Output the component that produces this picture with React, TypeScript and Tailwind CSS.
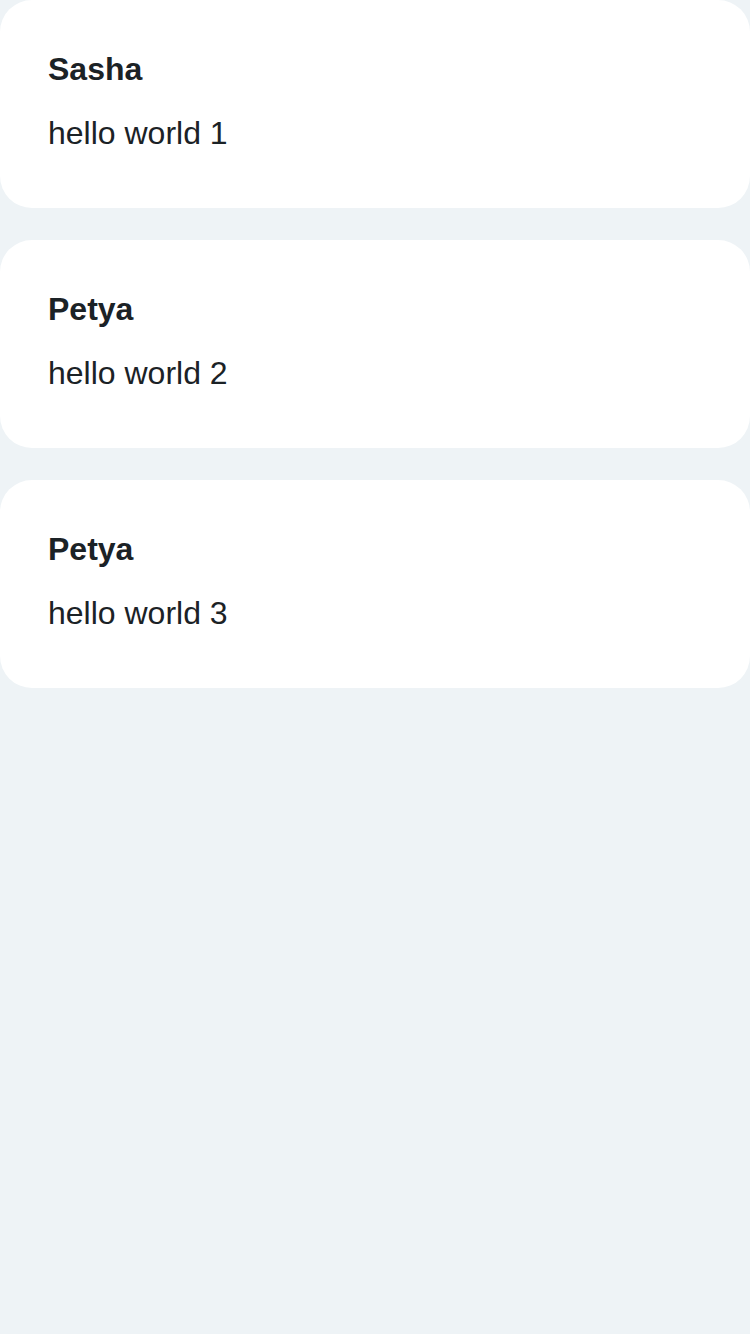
const messages = [
  { id: 1, author: 'Sasha', text: 'hello world 1' },
  { id: 2, author: 'Petya', text: 'hello world 2' },
  { id: 3, author: 'Petya', text: 'hello world 3' },
];

export default function App() {
  return (
    <div
      className="min-h-[1334px] w-full bg-[#eef3f6] flex flex-col gap-[32px] text-[#1b2226]"
      style={{ fontFamily: '"Liberation Sans", Arial, sans-serif' }}
    >
      {messages.map(m => (
        <div key={m.id} className="h-[208px] bg-white rounded-[32px] px-[48px] pt-[49px]">
          <div className="text-[32px] leading-[40px] font-bold">{m.author}</div>
          <div className="mt-[24px] text-[32px] leading-[40px]">{m.text}</div>
        </div>
      ))}
    </div>
  );
}
